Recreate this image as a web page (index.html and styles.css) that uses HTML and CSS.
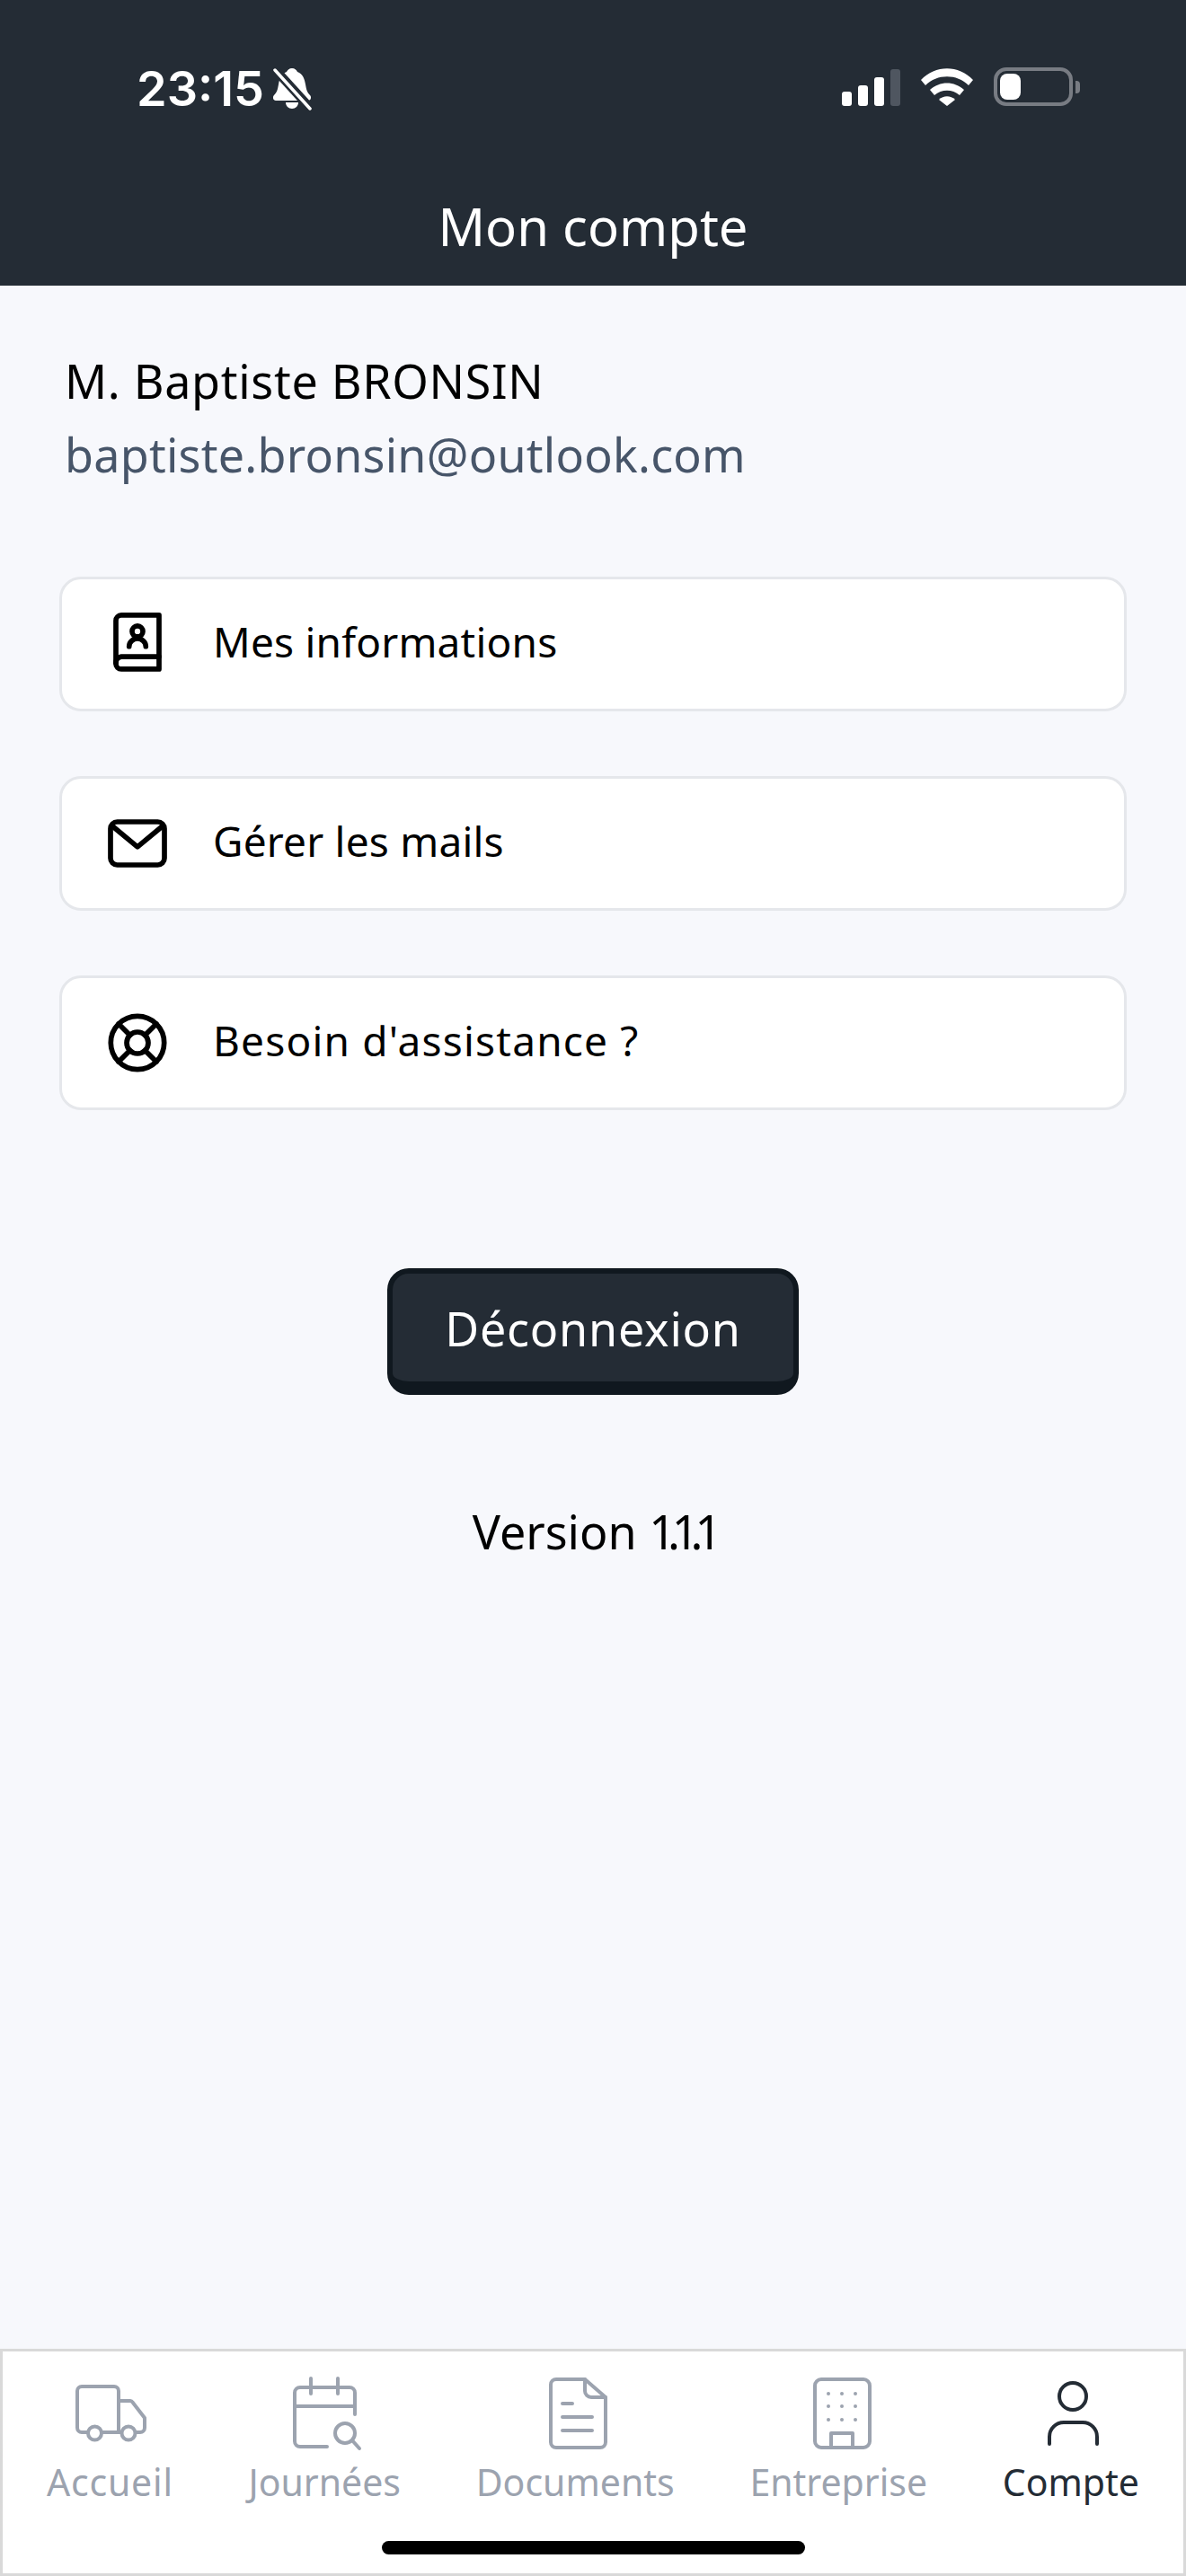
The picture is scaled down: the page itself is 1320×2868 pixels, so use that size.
FILE: index.html
```html
<!DOCTYPE html>
<html lang="fr">
<head>
  <meta charset="UTF-8" />
  <meta name="viewport" content="width=device-width, initial-scale=1.0"/>
  <title>Mon compte</title>
  <link rel="stylesheet" href="styles.css">
</head>
<body>
  <header class="header">
    <div class="status">
      <div class="status-left">
        <span class="time">23:15</span>
        <svg class="bell" width="44" height="48" viewBox="0 0 44 48">
          <path d="M22 1c3 0 5 2 6 4 6 2 8 8 9 14 1 6 2 9 5 12 2 2 1 6-2 6H4c-3 0-4-4-2-6 3-3 4-6 5-12 1-6 3-12 9-14 1-2 3-4 6-4z" fill="#fff"/>
          <path d="M15 39h14c0 4-3 7-7 7s-7-3-7-7z" fill="#fff"/>
          <path d="M2 1l40 44" stroke="#242c35" stroke-width="10"/>
          <path d="M3 3l39 43" stroke="#fff" stroke-width="3.5" stroke-linecap="round"/>
        </svg>
      </div>
      <div class="status-right">
        <svg width="65" height="41" viewBox="0 0 65 41">
          <rect x="0" y="25" width="11" height="16" rx="3" fill="#fff"/>
          <rect x="18" y="18" width="11" height="23" rx="3" fill="#fff"/>
          <rect x="36" y="9" width="11" height="32" rx="3" fill="#fff"/>
          <rect x="54" y="0" width="11" height="41" rx="3" fill="#4f5660"/>
        </svg>
        <svg width="58" height="42" viewBox="0 0 58 42">
          <path d="M0 13C16-4 42-4 58 13l-5 6C40 6 18 6 5 19z" fill="#fff"/>
          <path d="M10 24c11-10 27-10 38 0l-5 6c-8-7-20-7-28 0z" fill="#fff"/>
          <path d="M20 35c5-5 13-5 18 0l-9 7z" fill="#fff"/>
        </svg>
        <div class="battery">
          <div class="battery-level"></div>
        </div>
      </div>
    </div>
    <h1 class="title">Mon compte</h1>
  </header>

  <main class="content">
    <p class="name">M. Baptiste BRONSIN</p>
    <p class="email">baptiste.bronsin@outlook.com</p>

    <div class="menu">
      <a class="menu-item">
        <svg class="menu-icon" viewBox="0 0 24 24">
          <path d="M20 1.300v20H6a2 2 0 0 1-2-2v-16a2 2 0 0 1 2-2z"/>
          <path d="M4 19a2.300 2.300 0 0 1 2-2.300h14"/>
          <circle cx="12" cy="7.300" r="2"/>
          <path d="M8.900 12.900c0-1.600 1.400-2.900 3.100-2.900s3.100 1.300 3.100 2.900"/>
        </svg>
        <span class="menu-label">Mes informations</span>
      </a>
      <a class="menu-item">
        <svg class="menu-icon" viewBox="0 0 24 24">
          <rect x="2" y="4" width="20" height="16" rx="2.500"/>
          <path d="M2.600 5.500l9.400 7.800 9.400-7.800"/>
        </svg>
        <span class="menu-label">Gérer les mails</span>
      </a>
      <a class="menu-item">
        <svg class="menu-icon" viewBox="0 0 24 24">
          <circle cx="12" cy="12" r="9.900"/>
          <circle cx="12" cy="12" r="4"/>
          <path d="M5 5l4.200 4.200M19 5l-4.200 4.200M5 19l4.200-4.200M19 19l-4.200-4.200"/>
        </svg>
        <span class="menu-label spaced">Besoin d'assistance ?</span>
      </a>
    </div>

    <button class="logout">Déconnexion</button>
    <p class="version">Version <span class="version-num">1.1.1</span></p>
  </main>

  <nav class="tabbar">
    <div class="tab tab-wide">
      <svg class="tab-icon" viewBox="0 0 88 88">
        <path d="M20 65h-7a5 5 0 0 1-5-5V19a5 5 0 0 1 5-5h36a5 5 0 0 1 5 5v46"/>
        <path d="M35 65h22"/>
        <path d="M54 30h13a3 3 0 0 1 2.500 1.500L83 49v11a5 5 0 0 1-5 5h-5"/>
        <circle cx="27.500" cy="66" r="7.500"/>
        <circle cx="65" cy="66" r="7.500"/>
      </svg>
      <span>Accueil</span>
    </div>
    <div class="tab">
      <svg class="tab-icon" viewBox="2 0 88 88">
        <path d="M49 81H19a6 6 0 0 1-6-6V21a6 6 0 0 1 6-6h55a6 6 0 0 1 6 6v24"/>
        <path d="M13 36h67M31 5v17M61 5v17"/>
        <circle cx="69" cy="66" r="11"/>
        <path d="M77 74l8 9"/>
      </svg>
      <span>Journées</span>
    </div>
    <div class="tab">
      <svg class="tab-icon" viewBox="-3 0 88 88">
        <path d="M52 6H20a6 6 0 0 0-6 6v64a6 6 0 0 0 6 6h49a6 6 0 0 0 6-6V26z"/>
        <path d="M52 6v13a7 7 0 0 0 7 7h16"/>
        <path d="M27 33h11M27 48h33M27 63h33"/>
      </svg>
      <span>Documents</span>
    </div>
    <div class="tab">
      <svg class="tab-icon" viewBox="-3 0 88 88">
        <rect x="15" y="6" width="61" height="76" rx="7"/>
        <path d="M33 82V66h24v16"/>
        <g class="dots">
          <circle cx="30" cy="22" r="2"/><circle cx="45" cy="22" r="2"/><circle cx="60" cy="22" r="2"/>
          <circle cx="30" cy="36" r="2"/><circle cx="45" cy="36" r="2"/><circle cx="60" cy="36" r="2"/>
          <circle cx="30" cy="51" r="2"/><circle cx="45" cy="51" r="2"/><circle cx="60" cy="51" r="2"/>
        </g>
      </svg>
      <span>Entreprise</span>
    </div>
    <div class="tab active">
      <svg class="tab-icon" viewBox="-1 0 88 88">
        <circle cx="45" cy="25" r="15"/>
        <path d="M19 78v-8a16 16 0 0 1 16-16h21a16 16 0 0 1 16 16v8"/>
      </svg>
      <span>Compte</span>
    </div>
    <div class="home-bar"></div>
  </nav>
</body>
</html>
```

FILE: styles.css
```css
* {
  box-sizing: border-box;
}
body {
  margin: 0;
  min-height: 2868px;
  display: flex;
  flex-direction: column;
  font-family: "Noto Sans", sans-serif;
  background-color: #f7f8fc;
  color: #000;
}
.header {
  height: 318px;
  background-color: #242c35;
  color: #fff;
  padding-top: 75px;
}
.status {
  display: flex;
  justify-content: space-between;
  align-items: flex-start;
  padding: 0 126px 0 152px;
  height: 46px;
}
.status-left {
  display: flex;
  align-items: center;
  gap: 9px;
}
.status-right {
  display: flex;
  align-items: flex-end;
  gap: 23px;
}
.time {
  font-family: Inter, sans-serif;
  font-size: 54px;
  font-weight: 600;
  line-height: 46px;
}
.battery {
  position: relative;
  width: 88px;
  height: 43px;
  border: 4px solid #787c83;
  border-radius: 14px;
  padding: 3px;
}
.battery::after {
  content: "";
  position: absolute;
  right: -12px;
  top: 11px;
  width: 5px;
  height: 14px;
  background-color: #787c83;
  border-radius: 0 4px 4px 0;
}
.battery-level {
  width: 23px;
  height: 29px;
  background-color: #fff;
  border-radius: 8px;
}
.title {
  margin: 93px 0 0;
  text-align: center;
  font-size: 58px;
  font-weight: 400;
  line-height: 76px;
}
.content {
  flex: 1;
  padding: 76px 66px 0;
}
.name {
  margin: 0 0 0 6px;
  font-size: 52px;
  line-height: 60px;
  letter-spacing: 0.7px;
}
.email {
  margin: 22px 0 0 6px;
  font-size: 52px;
  line-height: 60px;
  letter-spacing: 0.25px;
  color: #475569;
}
.menu {
  margin-top: 106px;
  display: flex;
  flex-direction: column;
  gap: 72px;
}
.menu-item {
  display: flex;
  align-items: center;
  gap: 48px;
  height: 150px;
  padding-left: 48px;
  background-color: #fff;
  border: 3px solid #e5e7eb;
  border-radius: 24px;
  font-size: 46px;
  letter-spacing: 0.2px;
}
.menu-label {
  margin-bottom: 6px;
}
.spaced {
  letter-spacing: 1.2px;
}
.menu-icon {
  width: 72px;
  height: 72px;
  fill: none;
  stroke: #000;
  stroke-width: 1.9;
  stroke-linecap: round;
  stroke-linejoin: round;
}
.logout {
  display: block;
  margin: 176px auto 0;
  width: 458px;
  height: 141px;
  background-color: #242c35;
  color: #fff;
  border: 6px solid #10181f;
  border-bottom-width: 15px;
  border-radius: 24px;
  font-family: inherit;
  font-size: 52px;
  letter-spacing: 0.8px;
}
.version {
  margin: 122px 0 0;
  text-align: center;
  font-size: 52px;
  line-height: 60px;
}
.version-num {
  letter-spacing: -9px;
}
.tabbar {
  position: relative;
  height: 253px;
  background-color: #fff;
  border: 3px solid #d9d9d9;
  display: flex;
  justify-content: space-between;
  align-items: flex-start;
  padding: 25px 49px 0;
}
.tab {
  display: flex;
  flex-direction: column;
  align-items: center;
  color: #9ca3af;
  font-size: 41px;
  line-height: 56px;
}
.tab-wide {
  letter-spacing: 0.8px;
}
.tab-icon {
  width: 88px;
  height: 88px;
  margin-bottom: 4px;
  fill: none;
  stroke: currentColor;
  stroke-width: 4;
  stroke-linecap: round;
  stroke-linejoin: round;
}
.tab-icon .dots {
  fill: currentColor;
  stroke: none;
}
.tab.active {
  color: #242c35;
}
.home-bar {
  position: absolute;
  left: 422px;
  bottom: 21px;
  width: 471px;
  height: 15px;
  background-color: #000;
  border-radius: 8px;
}
```
